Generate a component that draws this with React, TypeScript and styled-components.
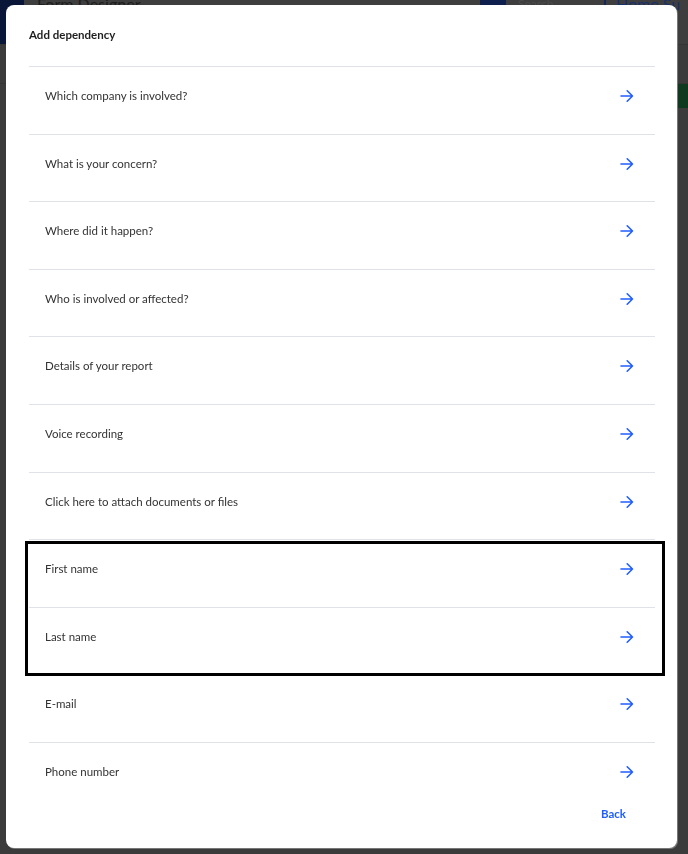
import React from "react";
import styled, { createGlobalStyle } from "styled-components";

const Global = createGlobalStyle`
  html, body { margin: 0; padding: 0; }
  body {
    width: 688px;
    height: 854px;
    overflow: hidden;
    background: #3b3b3b;
    font-family: Lato, "Noto Sans", "Liberation Sans", sans-serif;
  }
`;

const Page = styled.div`
  width: 688px;
  height: 854px;
  display: flex;
  flex-direction: column;
  background: #3b3b3b;
`;

const TopBar = styled.header`
  height: 44px;
  display: flex;
  align-items: flex-start;
  background: #3e3e3e;
  border-bottom: 1px solid #353535;
`;

const Brand = styled.div`
  width: 24px;
  height: 44px;
  background: #0a1638;
`;

const BarTitle = styled.div`
  margin-left: 13px;
  margin-top: -5px;
  font-size: 16px;
  line-height: 18px;
  color: #1e1e1e;
  font-weight: 500;
  flex: 1;
`;

const SearchBtn = styled.div`
  width: 26px;
  height: 10px;
  background: #0e1f4d;
`;

const SearchText = styled.div`
  width: 86px;
  margin-top: -3px;
  padding-left: 12px;
  font-size: 12px;
  line-height: 14px;
  color: #4a4a4a;
`;

const NavLinks = styled.div`
  margin-top: -5px;
  padding-left: 10px;
  border-left: 2px solid #14265a;
  height: 15px;
  font-size: 16px;
  line-height: 18px;
  color: #17306b;
  white-space: nowrap;
  width: 72px;
  overflow: hidden;
`;

const SubBar = styled.div`
  height: 38px;
  border-bottom: 1px solid #353535;
  display: flex;
  justify-content: flex-end;
  align-items: flex-end;
`;

const GreenTab = styled.div`
  width: 12px;
  height: 24px;
  background: #0f3a20;
  margin-bottom: -25px;
`;

const Overlay = styled.div`
  position: fixed;
  inset: 0;
  display: flex;
  align-items: flex-start;
  justify-content: flex-start;
  padding: 5px 0 0 6px;
`;

const Modal = styled.div`
  width: 671px;
  height: 843px;
  background: #ffffff;
  border-radius: 8px;
  box-shadow: 1px 1px 0 #777;
  display: flex;
  flex-direction: column;
  padding: 0 22px 0 23px;
  box-sizing: border-box;
  overflow: hidden;
`;

const Title = styled.h2`
  flex: none;
  margin: 0;
  height: 62px;
  display: flex;
  align-items: center;
  font-size: 11.5px;
  font-weight: 700;
  color: #1f1f1f;
  border-bottom: 1px solid #dfe2e8;
  box-sizing: border-box;
  padding-bottom: 2px;
`;

const List = styled.div`
  flex: none;
  display: flex;
  flex-direction: column;
`;

const Row = styled.button<{ $last?: boolean }>`
  all: unset;
  flex: none;
  box-sizing: border-box;
  height: ${(p) => (p.$last ? "60px" : "67.6px")};
  display: flex;
  align-items: flex-start;
  justify-content: space-between;
  padding: 20px 21px 0 16px;
  border-bottom: ${(p) => (p.$last ? "none" : "1px solid #dfe2e8")};
  font-family: Lato, "Noto Sans", "Liberation Sans", sans-serif;
  font-size: 11.5px;
  color: #333333;
  line-height: 18px;
  cursor: pointer;
`;

const Highlight = styled.div`
  position: relative;
  display: flex;
  flex-direction: column;
  &::after {
    content: "";
    position: absolute;
    top: 1px;
    bottom: -1px;
    left: -4px;
    right: -10px;
    border: 3px solid #000;
    pointer-events: none;
  }
`;

const Arrow = styled.svg`
  width: 14px;
  height: 14px;
  margin-top: 2px;
  flex: none;
`;

const Footer = styled.div`
  flex: none;
  display: flex;
  justify-content: flex-end;
  padding: 2px 29px 0 0;
`;

const BackButton = styled.button`
  all: unset;
  font-family: Lato, "Noto Sans", "Liberation Sans", sans-serif;
  font-size: 11.5px;
  line-height: 18px;
  font-weight: 700;
  color: #1f5eff;
  cursor: pointer;
`;

const ArrowIcon = () => (
  <Arrow viewBox="0 0 14 14" fill="none">
    <path
      d="M1 7h11.5M7.2 1.8L12.5 7l-5.3 5.2"
      stroke="#1f5eff"
      strokeWidth="1.6"
      strokeLinecap="round"
      strokeLinejoin="round"
    />
  </Arrow>
);

const before = [
  "Which company is involved?",
  "What is your concern?",
  "Where did it happen?",
  "Who is involved or affected?",
  "Details of your report",
  "Voice recording",
  "Click here to attach documents or files",
];
const highlighted = ["First name", "Last name"];
const after = ["E-mail", "Phone number"];

const Item = ({ label, last }: { label: string; last?: boolean }) => (
  <Row $last={last}>
    <span>{label}</span>
    <ArrowIcon />
  </Row>
);

export default function App() {
  return (
    <>
      <Global />
      <Page>
        <TopBar>
          <Brand />
          <BarTitle>Form Designer</BarTitle>
          <SearchBtn />
          <SearchText>Search</SearchText>
          <NavLinks>Home Su</NavLinks>
        </TopBar>
        <SubBar>
          <GreenTab />
        </SubBar>
      </Page>
      <Overlay>
        <Modal>
          <Title>Add dependency</Title>
          <List>
            {before.map((l) => (
              <Item key={l} label={l} />
            ))}
            <Highlight>
              {highlighted.map((l) => (
                <Item key={l} label={l} />
              ))}
            </Highlight>
            {after.map((l, i) => (
              <Item key={l} label={l} last={i === after.length - 1} />
            ))}
          </List>
          <Footer>
            <BackButton>Back</BackButton>
          </Footer>
        </Modal>
      </Overlay>
    </>
  );
}
